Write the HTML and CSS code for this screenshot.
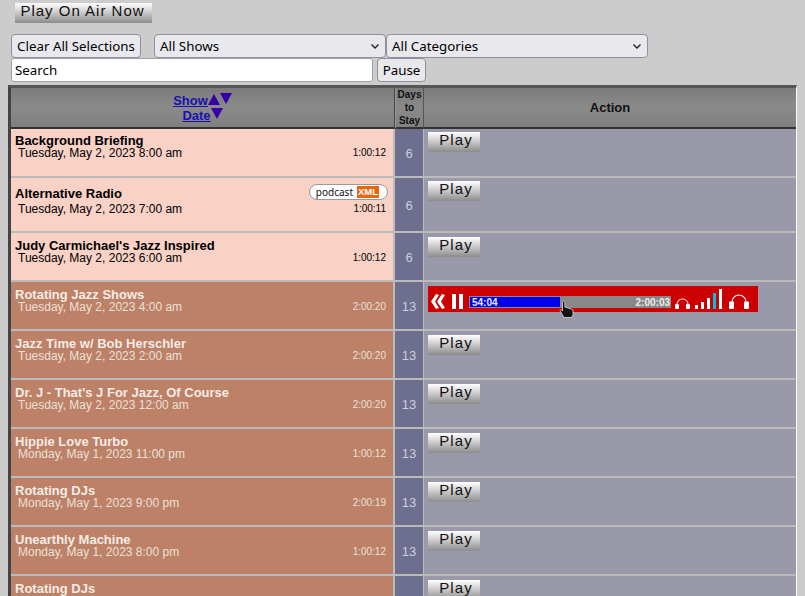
FILE: index.html
```html
<!DOCTYPE html>
<html lang="en">
<head>
<meta charset="utf-8">
<title>Shows</title>
<link rel="stylesheet" href="styles.css">
</head>
<body>
<div class="topbar"><button class="gbtn onair">Play On Air Now</button></div>
<div class="filters">
  <div class="filter-row">
    <button class="btn clear">Clear All Selections</button>
    <select class="sel shows"><option>All Shows</option></select>
    <select class="sel cats"><option>All Categories</option></select>
  </div>
  <div class="filter-row second">
    <input class="search" type="text" value="Search">
    <button class="btn pause">Pause</button>
  </div>
</div>
<table class="grid">
  <colgroup><col class="c1"><col class="c2"><col class="c3"></colgroup>
  <thead>
    <tr>
      <th class="h-show">
        <div class="sort"><a href="#">Show</a><svg width="12" height="12" viewBox="0 0 12 12" class="up"><path d="M6 0 L12 11 L0 11 Z" fill="#3300aa"/></svg><svg width="12" height="12" viewBox="0 0 12 12" class="dn"><path d="M0 0 L12 0 L6 11 Z" fill="#3300aa"/></svg></div>
        <div class="sort"><a href="#">Date</a><svg width="12" height="12" viewBox="0 0 12 12" class="dn2"><path d="M0 0 L12 0 L6 11 Z" fill="#3300aa"/></svg></div>
      </th>
      <th class="h-days">Days<br>to<br>Stay</th>
      <th class="h-action">Action</th>
    </tr>
  </thead>
  <tbody>
    <tr class="new first"><td class="show"><div class="title">Background Briefing</div><div class="meta"><span>Tuesday, May 2, 2023 8:00 am</span><span class="dur">1:00:12</span></div></td><td class="days">6</td><td class="act"><button class="gbtn play">Play</button></td></tr>
    <tr class="new tall"><td class="show"><div class="title pod-row"><span>Alternative Radio</span><span class="pod">podcast<b>XML</b></span></div><div class="meta low"><span>Tuesday, May 2, 2023 7:00 am</span><span class="dur">1:00:11</span></div></td><td class="days">6</td><td class="act"><button class="gbtn play">Play</button></td></tr>
    <tr class="new"><td class="show"><div class="title">Judy Carmichael's Jazz Inspired</div><div class="meta"><span>Tuesday, May 2, 2023 6:00 am</span><span class="dur">1:00:12</span></div></td><td class="days">6</td><td class="act"><button class="gbtn play">Play</button></td></tr>
    <tr class="old"><td class="show"><div class="title">Rotating Jazz Shows</div><div class="meta"><span>Tuesday, May 2, 2023 4:00 am</span><span class="dur">2:00:20</span></div></td><td class="days">13</td><td class="act">
      <div class="player">
        <svg class="rew" width="14" height="15" viewBox="0 0 14 15"><path d="M5 0 L8 1 L4 7.500 L8 14 L5 15 L0 7.500 Z M11 0 L14 1 L10 7.500 L14 14 L11 15 L6 7.500 Z" fill="#fff"/></svg>
        <span class="pz"></span><span class="pz"></span>
        <div class="track"><div class="fill">54:04</div><span class="total">2:00:03</span></div>
        <svg class="hp small" width="15" height="11" viewBox="0 0 15 11"><path d="M2 6 A5.500 5 0 0 1 13 6" fill="none" stroke="#fff" stroke-width="1"/><rect x="0" y="6" width="4" height="5" rx="1" fill="#fff"/><rect x="11" y="6" width="4" height="5" rx="1" fill="#fff"/></svg>
        <div class="bars"><i class="b1"></i><i class="b2"></i><i class="b3"></i><i class="b4"></i><i class="b5"></i></div>
        <svg class="hp big" width="20" height="15" viewBox="0 0 20 15"><path d="M3 8 A7 7 0 0 1 17 8" fill="none" stroke="#fff" stroke-width="1.200"/><rect x="0" y="7.500" width="5" height="7.500" rx="1" fill="#fff"/><rect x="15" y="7.500" width="5" height="7.500" rx="1" fill="#fff"/></svg>
      </div>
      <svg class="cursor" width="15" height="17" viewBox="0 0 14 17"><path d="M3 1.500 a1.200 1.200 0 0 1 2.400 0 V6 L11.500 8 A2 2 0 0 1 13.500 10 V14 L12 16.500 H4.500 L0.500 9.500 L1.500 8.500 L3 10 Z" fill="#111" stroke="#ddd" stroke-width="0.800"/></svg>
    </td></tr>
    <tr class="old"><td class="show"><div class="title">Jazz Time w/ Bob Herschler</div><div class="meta"><span>Tuesday, May 2, 2023 2:00 am</span><span class="dur">2:00:20</span></div></td><td class="days">13</td><td class="act"><button class="gbtn play">Play</button></td></tr>
    <tr class="old"><td class="show"><div class="title">Dr. J - That's J For Jazz, Of Course</div><div class="meta"><span>Tuesday, May 2, 2023 12:00 am</span><span class="dur">2:00:20</span></div></td><td class="days">13</td><td class="act"><button class="gbtn play">Play</button></td></tr>
    <tr class="old"><td class="show"><div class="title">Hippie Love Turbo</div><div class="meta"><span>Monday, May 1, 2023 11:00 pm</span><span class="dur">1:00:12</span></div></td><td class="days">13</td><td class="act"><button class="gbtn play">Play</button></td></tr>
    <tr class="old"><td class="show"><div class="title">Rotating DJs</div><div class="meta"><span>Monday, May 1, 2023 9:00 pm</span><span class="dur">2:00:19</span></div></td><td class="days">13</td><td class="act"><button class="gbtn play">Play</button></td></tr>
    <tr class="old"><td class="show"><div class="title">Unearthly Machine</div><div class="meta"><span>Monday, May 1, 2023 8:00 pm</span><span class="dur">1:00:12</span></div></td><td class="days">13</td><td class="act"><button class="gbtn play">Play</button></td></tr>
    <tr class="old"><td class="show"><div class="title">Rotating DJs</div><div class="meta"><span>Monday, May 1, 2023 6:00 pm</span><span class="dur">2:00:19</span></div></td><td class="days">13</td><td class="act"><button class="gbtn play">Play</button></td></tr>
  </tbody>
</table>
</body>
</html>
```
FILE: styles.css
```css
html { height: 100%; overflow: hidden; }
body {
  margin: 0;
  background: #cccccc;
  font-family: "Liberation Sans", Arial, sans-serif;
}
.topbar { padding: 3px 0 0 15px; height: 28px; }
.gbtn {
  display: block;
  margin: 0;
  padding: 0;
  border: 0;
  border-radius: 0;
  background: linear-gradient(#ffffff 0%, #d8d8d8 35%, #8c8c8c 100%);
  color: #111;
  font-family: "Liberation Sans", Arial, sans-serif;
  font-size: 15px;
  letter-spacing: 1.1px;
  line-height: 16px;
  text-align: center;
}
.onair { width: 137px; height: 20px; padding: 0 2px 6px 0; letter-spacing: 1px; }
.filters { padding: 3px 0 0 11px; }
.filter-row { display: flex; align-items: flex-start; }
.btn, .sel, .search {
  font-family: "Noto Sans", "Open Sans", sans-serif;
  font-size: 13.33px;
  color: #000;
  box-sizing: border-box;
  height: 24px;
  margin: 0;
  border: 1px solid #8f8f9d;
  border-radius: 4px;
  background: #e9e9ed;
}
.btn { padding: 0 5px; }
.clear { width: 130px; }
.sel {
  appearance: none;
  padding: 0 1px 0 5px;
  background: #e9e9ed url("data:image/svg+xml,%3Csvg xmlns='http://www.w3.org/2000/svg' width='8' height='5'%3E%3Cpath d='M0.500 0.500 L4 4 L7.500 0.500' fill='none' stroke='%23222' stroke-width='1.400'/%3E%3C/svg%3E") no-repeat right 6px center;
}
.shows { width: 232px; margin-left: 13px; }
.cats { width: 262px; }
.search {
  width: 362px;
  padding: 0 3px;
  border-radius: 3px;
  background: #fff;
  border-color: #a0a0a8;
}
.pause { margin-left: 4px; width: 49px; padding: 0; }
.grid {
  margin: 3px 0 0 8px;
  width: 789px;
  table-layout: fixed;
  border-collapse: separate;
  border-spacing: 0;
  border-top: 3px solid #555;
  border-left: 3px solid #444;
  border-right: 1px solid #fff;
}
.c1 { width: 384px; }
.c2 { width: 29px; }
th {
  height: 38px;
  padding: 0;
  background: linear-gradient(#7c7c7c, #8a8a8a 50%, #808080);
  border-bottom: 2px solid #333;
  color: #111;
  font-size: 13px;
  vertical-align: middle;
}
.h-show { border-right: 1px solid #444; }
.h-days { border-right: 1px solid #555; border-left: 1px solid #999; font-size: 10px; line-height: 13px; }
.sort { display: flex; justify-content: center; align-items: flex-start; height: 15px; }
.sort a { color: #1a10b0; font-weight: bold; font-size: 13px; line-height: 15px; }
.sort .up { margin-top: 1px; }
.sort .dn2 { margin-top: 0; }
td { padding: 0; vertical-align: top; border-bottom: 2px solid #bbbbbb; height: 49px; }
.tall td { height: 55px; }
.show {
  padding: 6px 7px 0 4px;
  border-right: 2px solid #bbbbbb;
  box-sizing: border-box;
}
.first .show { padding-top: 5px; }
.title { font-weight: bold; font-size: 13px; line-height: 13px; }
.meta { display: flex; justify-content: space-between; font-size: 12px; line-height: 12px; padding: 0 0 0 3px; }
.meta.low { padding-top: 3px; }
.dur { font-size: 10px; }
.new .show { background: #f9d1c5; color: #000; }
.old .show { background: #bd8168; color: #f0e6de; }
.old .title { color: #f4ece6; }
.old .meta { color: #ebe0d8; }
.pod-row { display: flex; justify-content: space-between; align-items: flex-start; height: 16px; }
.pod-row span:first-child { margin-top: 3px; }
.pod {
  display: inline-flex;
  align-items: center;
  box-sizing: border-box;
  height: 16px;
  margin-right: -2px;
  padding: 0 8px 0 6px;
  background: #fff;
  border: 1px solid #999;
  border-radius: 8px;
  font-weight: normal;
  font-family: "Noto Sans", sans-serif;
  font-size: 10px;
  color: #111;
}
.pod b {
  width: 22px;
  background: #e8650c;
  color: #fff;
  font-family: "Liberation Sans", sans-serif;
  font-size: 9.500px;
  letter-spacing: 0;
  text-align: center;
  line-height: 12px;
  margin-left: 4px;
}
.days {
  background: #6e6e8f;
  color: #ccd0de;
  font-size: 13px;
  text-align: center;
  vertical-align: middle;
  border-right: 1px solid #bbbbbb;
  padding-top: 2px;
  box-sizing: border-box;
}
.act { background: #9999aa; padding: 4px 0 0 4px; position: relative; box-sizing: border-box; }
.first .act, .tall .act { padding-top: 3px; }
.play { width: 52px; height: 20px; padding: 0 0 4px 4px; }
.player {
  display: flex;
  align-items: flex-end;
  width: 330px;
  height: 26px;
  padding: 0 0 3px 3px;
  box-sizing: border-box;
  background: #cc0000;
}
.rew { flex: none; margin: 0 7px 0 0; }
.pz { display: block; flex: none; width: 4px; height: 15px; background: #fff; margin-right: 3px; }
.pz + .pz { margin-right: 6px; }
.track {
  position: relative;
  display: flex;
  align-items: center;
  justify-content: flex-end;
  flex: none;
  width: 202px;
  height: 12px;
  margin-bottom: 1px;
  background: #888;
  color: #eee;
  font-size: 10px;
  font-weight: bold;
}
.total { padding-right: 1px; }
.fill {
  position: absolute;
  left: 0;
  top: 0;
  box-sizing: border-box;
  width: 92px;
  height: 12px;
  padding-left: 2px;
  line-height: 11px;
  background: #0000ee;
  border: 1px solid #889;
  color: #e8e8ff;
}
.hp { flex: none; }
.hp.small { margin-left: 4px; }
.hp.big { margin-left: 7px; }
.bars { display: flex; align-items: flex-end; gap: 3px; margin-left: 5px; flex: none; }
.bars i { display: block; width: 3px; background: #fff; }
.b1 { height: 4px; }
.b2 { height: 7px; }
.b3 { height: 11px; }
.b4 { height: 16px; background: #00c0e8 !important; }
.b5 { height: 20px; }
.cursor { position: absolute; left: 135px; top: 19px; }
```
